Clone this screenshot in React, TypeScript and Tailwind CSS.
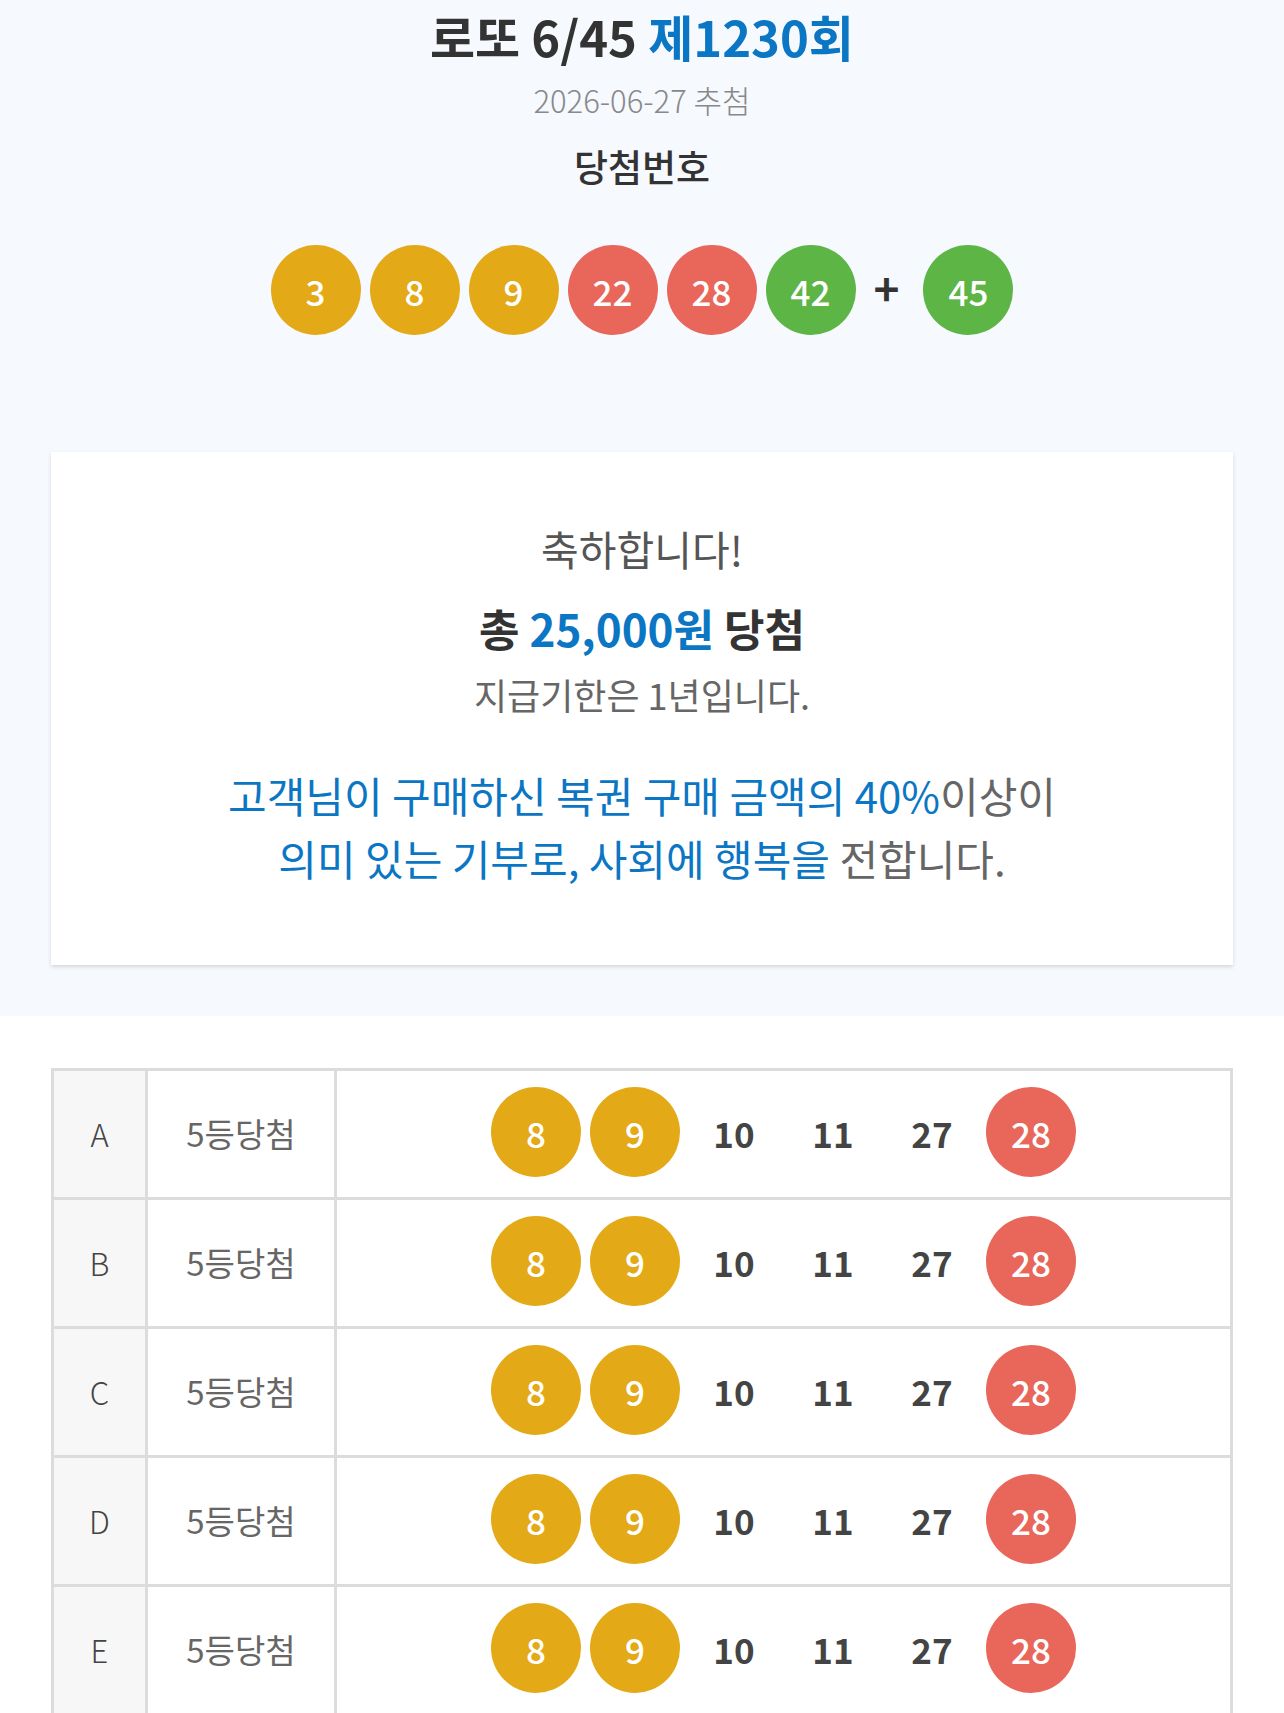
import React from "react";

type Ball = { n: number; color: string };

const ballColor = (n: number) => {
  if (n <= 10) return "bg-[#e3a917]";
  if (n <= 20) return "bg-[#3f8ed8]";
  if (n <= 30) return "bg-[#e8665a]";
  if (n <= 40) return "bg-[#9a9a9a]";
  return "bg-[#5cb545]";
};

const winning: Ball[] = [3, 8, 9, 22, 28, 42].map((n) => ({ n, color: ballColor(n) }));
const bonus = 45;

const games = ["A", "B", "C", "D", "E"].map((label) => ({
  label,
  rank: "5등당첨",
  nums: [8, 9, 10, 11, 27, 28],
}));
const hits = [8, 9, 28];

function NumBall({ n }: { n: number }) {
  return (
    <div
      className={`w-[90px] h-[90px] rounded-full flex items-center justify-center text-white text-[35px] font-medium leading-none ${ballColor(n)}`}
    >
      {n}
    </div>
  );
}

function PlainNum({ n }: { n: number }) {
  return (
    <div className="w-[90px] h-[90px] flex items-center justify-center text-[#444] text-[35px] font-bold leading-none">
      {n}
    </div>
  );
}

export default function App() {
  return (
    <div className="w-[1284px] font-['Noto_Sans_CJK_KR',sans-serif] bg-white">
      <section className="bg-[#f6f9fe] pt-[4px] pb-[51px] px-[51px]">
        <h1 className="text-center text-[49px] leading-[63px] font-bold text-[#333]">
          로또 6/45 <span className="text-[#0b76c3]">제1230회</span>
        </h1>
        <p className="mt-[12px] text-center text-[31px] leading-[42px] text-[#888] font-light">
          2026-06-27 추첨
        </p>
        <h2 className="mt-[21px] text-center text-[37px] leading-[48px] font-medium text-[#333]">
          당첨번호
        </h2>
        <div className="mt-[55px] flex items-center justify-center gap-[9px]">
          {winning.map((b) => (
            <NumBall key={b.n} n={b.n} />
          ))}
          <span className="ml-[9px] mr-[15px] text-[44px] leading-none font-bold text-[#333] pb-[6px]">+</span>
          <NumBall n={bonus} />
        </div>

        <div className="mt-[117px] bg-white shadow-[0_2px_4px_rgba(0,0,0,0.14)] h-[513px] pt-[69px] text-center">
          <p className="text-[41px] leading-[54px] text-[#555]">축하합니다!</p>
          <p className="mt-[23px] text-[44px] leading-[60px] font-bold text-[#333]">
            총 <span className="text-[#0b76c3]">25,000원</span> 당첨
          </p>
          <p className="mt-[13px] text-[36px] leading-[46px] text-[#666]">지급기한은 1년입니다.</p>
          <p className="mt-[46px] text-[42px] leading-[63px] text-[#0b76c3]">
            고객님이 구매하신 복권 구매 금액의 40%<span className="text-[#666]">이상이</span>
            <br />
            의미 있는 기부로, 사회에 행복을 <span className="text-[#666]">전합니다.</span>
          </p>
        </div>
      </section>

      <div className="px-[51px] pt-[52px]">
        <table className="w-full border-collapse border-[3px] border-[#dcdcdc]">
          <tbody>
            {games.map((g) => (
              <tr key={g.label} className="h-[129px]">
                <td className="w-[94px] border-[3px] border-[#dcdcdc] bg-[#f7f7f7] text-center text-[31px] text-[#444] font-light">
                  {g.label}
                </td>
                <td className="w-[189px] border-[3px] border-[#dcdcdc] text-center text-[33px] text-[#666]">
                  {g.rank}
                </td>
                <td className="border-[3px] border-[#dcdcdc]">
                  <div className="flex items-center justify-center gap-[9px] pb-[4px]">
                    {g.nums.map((n) =>
                      hits.includes(n) ? <NumBall key={n} n={n} /> : <PlainNum key={n} n={n} />
                    )}
                  </div>
                </td>
              </tr>
            ))}
          </tbody>
        </table>
      </div>
    </div>
  );
}
